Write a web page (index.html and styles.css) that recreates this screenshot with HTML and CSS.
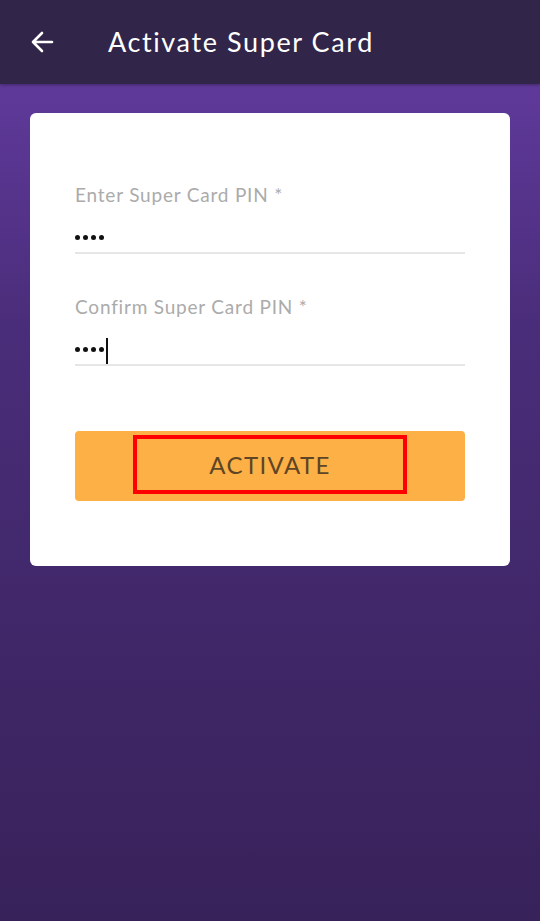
FILE: index.html
```html
<!DOCTYPE html>
<html lang="en">
<head>
    <meta charset="UTF-8">
    <meta name="viewport" content="width=device-width, initial-scale=1.0">
    <title>Activate Super Card</title>
    <link rel="stylesheet" href="styles.css">
</head>
<body>

    <header class="topbar">
        <button class="back-btn" aria-label="Back">
            <svg width="24" height="24" viewBox="0 0 24 24">
                <path d="M22 12H3M12 3l-9 9 9 9" fill="none" stroke="#fff" stroke-width="2.6" stroke-linecap="round" stroke-linejoin="round"/>
            </svg>
        </button>
        <h1 class="title">Activate Super Card</h1>
    </header>

    <main class="content">
        <div class="card">
            <div class="field">
                <label class="field-label">Enter Super Card PIN *</label>
                <div class="field-value">
                    <span class="dot"></span><span class="dot"></span><span class="dot"></span><span class="dot"></span>
                </div>
            </div>

            <div class="field">
                <label class="field-label">Confirm Super Card PIN *</label>
                <div class="field-value">
                    <span class="dot"></span><span class="dot"></span><span class="dot"></span><span class="dot"></span>
                    <span class="cursor"></span>
                </div>
            </div>

            <button class="activate-btn">
                <span class="highlight">ACTIVATE</span>
            </button>
        </div>
    </main>

</body>
</html>
```

FILE: styles.css
```css
html, body {
    height: 100%;
    margin: 0;
}

body {
    display: flex;
    flex-direction: column;
    font-family: 'Lato', 'Open Sans', sans-serif;
    background: linear-gradient(to bottom, #673ea6 0%, #4a2d7a 35%, #3e2665 75%, #38225a 100%);
}

.topbar {
    height: 84px;
    flex-shrink: 0;
    display: flex;
    align-items: center;
    background-color: #31254a;
    box-shadow: 0 1px 3px rgba(0, 0, 0, 0.35);
}

.back-btn {
    width: 24px;
    height: 24px;
    margin-left: 30px;
    padding: 0;
    background: none;
    border: none;
    cursor: pointer;
}

.back-btn svg {
    display: block;
}

.title {
    margin: 0 0 2px 54px;
    font-size: 27px;
    font-weight: 400;
    color: #fff;
    letter-spacing: 1.6px;
}

.content {
    flex: 1;
    padding: 29px 30px;
}

.card {
    background-color: #fff;
    border-radius: 6px;
    padding: 70px 45px 65px;
}

.field + .field {
    margin-top: 41px;
}

.field-label {
    display: block;
    font-size: 19px;
    line-height: 24px;
    color: #ababab;
    letter-spacing: 0.8px;
}

.field-value {
    height: 47px;
    box-sizing: border-box;
    padding-top: 15px;
    display: flex;
    align-items: center;
    gap: 3px;
    border-bottom: 2px solid #e6e6e6;
}

.dot {
    width: 5px;
    height: 5px;
    border-radius: 50%;
    background-color: #111;
}

.cursor {
    width: 2px;
    height: 26px;
    margin-left: -1px;
    margin-top: 4px;
    background-color: #111;
}

.activate-btn {
    display: flex;
    justify-content: center;
    align-items: center;
    width: 100%;
    height: 70px;
    margin-top: 65px;
    padding: 0;
    background-color: #fdb045;
    border: none;
    border-radius: 4px;
    cursor: pointer;
}

.highlight {
    display: flex;
    justify-content: center;
    align-items: center;
    width: 274px;
    height: 59px;
    margin-bottom: 3px;
    box-sizing: border-box;
    border: 4px solid #ff0000;
    font-family: 'Lato', 'Open Sans', sans-serif;
    font-size: 24px;
    color: #5e4526;
    letter-spacing: 1.4px;
}
```
